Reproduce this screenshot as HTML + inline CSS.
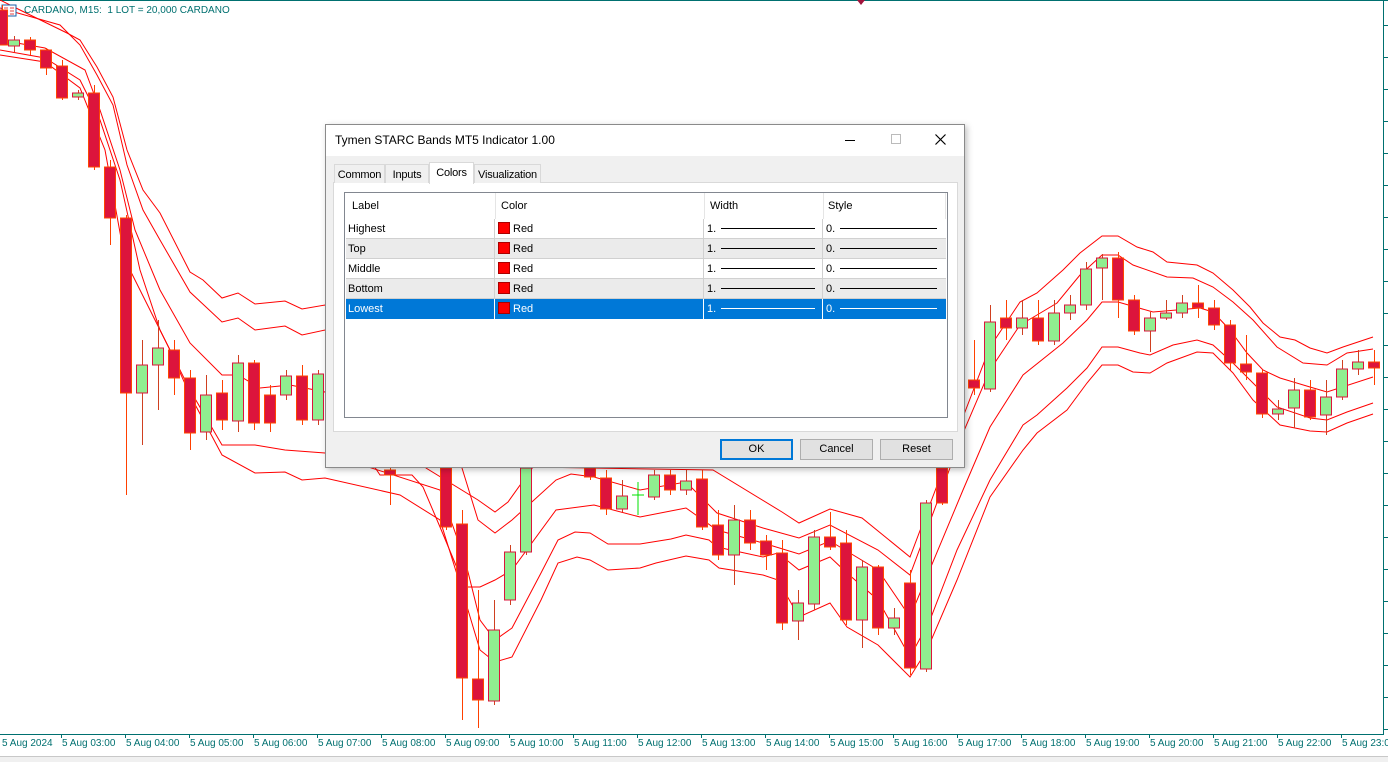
<!DOCTYPE html>
<html><head><meta charset="utf-8">
<style>
*{margin:0;padding:0;box-sizing:border-box}
body{width:1388px;height:762px;overflow:hidden;background:#fff;font-family:"Liberation Sans",sans-serif;position:relative}
#chart{position:absolute;left:0;top:0}
.ax{position:absolute;top:738px;font-size:10px;color:#007070;white-space:nowrap}
.title{position:absolute;left:24px;top:5px;font-size:10px;color:#007070}
.dlg{position:absolute;left:325px;top:124px;width:640px;height:344px;background:#f0f0f0;border:1px solid #8a8a8a;box-shadow:2px 2px 6px rgba(0,0,0,.25);font-size:11px;color:#000}
.tb{height:31px;background:#fff;position:relative}
.tb span{position:absolute;left:9px;top:8px;font-size:12px}
.tab{position:absolute;top:39px;height:19px;border:1px solid #d9d9d9;border-bottom:none;background:#f0f0f0;padding:4px 0 0;text-align:center;font-size:11px;letter-spacing:-0.2px;white-space:nowrap}
.panel{position:absolute;left:7px;top:57px;width:625px;height:250px;background:#fff;border:1px solid #d9d9d9}
.list{position:absolute;left:18px;top:67px;width:604px;height:226px;border:1px solid #828790;background:#fff}
.row{position:absolute;left:1px;width:600px;height:20px}
.c{position:absolute;top:4px}
.sw{position:absolute;top:3px;width:12px;height:12px;background:#f00;border:1px solid #a00}
.ln{position:absolute;top:9px;height:1px;background:#000}
.vl{position:absolute;top:0;width:1px;height:20px;background:#d0d0d0}
.btn{position:absolute;top:314px;width:73px;height:21px;border:1px solid #adadad;background:#e1e1e1;text-align:center;font-size:11px;line-height:19px}
</style></head><body>
<svg id="chart" width="1388" height="762" xmlns="http://www.w3.org/2000/svg"></svg>
<div class="title">CARDANO, M15:&nbsp; 1 LOT = 20,000 CARDANO</div>
<div class="ax" style="left:2px">5 Aug 2024</div>
<div id="axl"></div>

<div class="dlg">
 <div class="tb"><span>Tymen STARC Bands MT5 Indicator 1.00</span>
  <div style="position:absolute;left:519px;top:15px;width:10px;height:1px;background:#000"></div>
  <div style="position:absolute;left:565px;top:9px;width:10px;height:10px;border:1px solid #bbb"></div>
  <svg style="position:absolute;left:609px;top:9px" width="11" height="11"><path d="M0.5 0.5L10.5 10.5M10.5 0.5L0.5 10.5" stroke="#000" stroke-width="1.2"/></svg>
 </div>
 <div class="panel"></div>
 <div class="tab" style="left:8px;width:51px">Common</div>
 <div class="tab" style="left:59px;width:44px">Inputs</div>
 <div class="tab" style="left:103px;top:37px;height:22px;width:45px;background:#fff;z-index:2">Colors</div>
 <div class="tab" style="left:148px;width:67px">Visualization</div>
 <div class="list">
  <div class="row" style="top:0;height:26px"><span class="c" style="left:6px;top:7px">Label</span><span class="c" style="left:155px;top:7px">Color</span><span class="c" style="left:364px;top:7px">Width</span><span class="c" style="left:482px;top:7px">Style</span>
   <div class="vl" style="left:149px;height:26px;background:#e5e5e5"></div><div class="vl" style="left:358px;height:26px;background:#e5e5e5"></div><div class="vl" style="left:477px;height:26px;background:#e5e5e5"></div><div class="vl" style="left:599px;height:26px;background:#e5e5e5"></div></div>
  <div class="row" style="top:26px;background:#fff;border-bottom:1px solid #d0d0d0"><span class="c" style="left:2px">Highest</span></div>
  <div class="row" style="top:46px;background:#ebebeb;border-bottom:1px solid #d0d0d0"><span class="c" style="left:2px">Top</span></div>
  <div class="row" style="top:66px;background:#fff;border-bottom:1px solid #d0d0d0"><span class="c" style="left:2px">Middle</span></div>
  <div class="row" style="top:86px;background:#ebebeb;border-bottom:1px solid #d0d0d0"><span class="c" style="left:2px">Bottom</span></div>
  <div class="row" style="top:106px;background:#0078d7;color:#fff"><span class="c" style="left:2px">Lowest</span></div>
  <div id="cells"></div>
 </div>
 <div class="btn" style="left:394px;border:2px solid #0078d7;line-height:17px">OK</div>
 <div class="btn" style="left:474px">Cancel</div>
 <div class="btn" style="left:554px">Reset</div>
</div>
<script>
var s=document.getElementById('chart'),h='';
h+='<rect x="0" y="0" width="1388" height="1" fill="#007070"/>';
h+='<rect x="1383" y="0" width="1" height="735" fill="#007070"/><rect x="0" y="734" width="1384" height="1" fill="#007070"/>';
for(var y=25;y<734;y+=32)h+='<rect x="1384" y="'+y+'" width="4" height="1" fill="#007070"/>';
h+='<rect x="0" y="756" width="1388" height="6" fill="#f0f0f0"/><rect x="0" y="756" width="1388" height="1" fill="#c8c8c8"/>';
var L=[
[[0,0],[20,10],[67,33],[80,40],[97,67],[113,97],[127,150],[143,190],[160,213],[190,272],[203,280],[222,298],[238,293],[255,304],[285,301],[302,309],[325,305],[426,468],[478,500],[495,512],[508,502],[533,467],[713,470],[782,512],[799,523],[830,509],[862,518],[910,557],[963,417],[990,347],[1020,302],[1037,293],[1063,270],[1080,253],[1102,236],[1118,236],[1137,247],[1153,252],[1167,262],[1197,265],[1213,273],[1233,290],[1250,307],[1263,323],[1280,337],[1295,340],[1310,348],[1327,353],[1343,347],[1373,337]],
[[0,8],[60,25],[80,45],[97,75],[113,105],[127,165],[143,210],[160,240],[190,292],[222,322],[238,318],[255,330],[285,326],[302,335],[325,330],[462,468],[478,520],[495,533],[512,520],[556,480],[571,474],[594,477],[640,490],[686,482],[717,513],[763,528],[799,538],[830,525],[878,550],[910,575],[963,433],[990,370],[1020,325],[1037,315],[1057,303],[1080,275],[1102,255],[1118,255],[1133,265],[1167,277],[1193,278],[1213,287],[1233,302],[1253,320],[1277,347],[1303,363],[1327,365],[1347,353],[1373,349]],
[[0,40],[45,48],[85,70],[100,110],[120,170],[135,230],[160,290],[190,343],[222,375],[238,375],[260,388],[290,385],[325,392],[380,475],[412,475],[423,487],[440,527],[465,587],[480,587],[495,580],[512,570],[556,510],[594,505],[640,517],[686,508],[717,530],[763,543],[799,554],[830,541],[878,570],[910,617],[963,490],[990,427],[1023,375],[1063,343],[1087,320],[1102,302],[1118,302],[1153,312],[1200,308],[1213,312],[1230,330],[1247,353],[1263,370],[1280,378],[1310,387],[1327,392],[1373,377]],
[[0,50],[45,58],[80,80],[100,120],[120,180],[140,270],[160,330],[190,390],[222,445],[255,445],[285,450],[325,453],[440,490],[465,560],[480,620],[495,640],[512,628],[541,573],[558,540],[575,532],[590,533],[608,544],[640,544],[671,539],[686,535],[709,540],[717,547],[763,557],[778,553],[799,570],[830,557],[847,573],[878,600],[910,657],[930,620],[957,550],[990,480],[1023,425],[1037,415],[1067,388],[1087,368],[1102,347],[1118,347],[1140,353],[1150,355],[1173,345],[1197,340],[1213,345],[1233,363],[1253,383],[1277,407],[1310,418],[1327,420],[1347,412],[1373,403]],
[[0,55],[45,62],[80,88],[105,150],[125,260],[145,300],[170,350],[190,395],[222,455],[255,473],[285,472],[302,480],[325,478],[400,495],[440,520],[465,600],[480,650],[495,662],[512,657],[541,600],[558,563],[577,557],[590,560],[608,570],[640,568],[656,563],[686,556],[709,560],[719,568],[763,575],[778,580],[799,617],[830,603],[847,627],[878,645],[910,677],[927,650],[957,580],[990,497],[1023,450],[1037,433],[1067,410],[1087,383],[1102,365],[1118,365],[1133,372],[1150,373],[1167,363],[1197,352],[1213,353],[1233,373],[1253,400],[1280,425],[1310,431],[1327,432],[1347,423],[1373,414]]];
L.forEach(function(p){h+='<polyline fill="none" stroke="#f00" stroke-width="1" points="'+p.map(function(q){return q.join(',')}).join(' ')+'"/>';});
h+='<rect x="2" y="5" width="14" height="11" fill="#fff" stroke="#1a5fa8"/><path d="M4 8h4M4 11h4M4 14h4M10 8h4M10 11h4M10 14h4" stroke="#e04040"/>';
h+='<path d="M857 0l4 5 4-5z" fill="#a0143c"/>';
var ax='';
for(var i=0;i<21;i++){var x=62+i*64;h+='<rect x="'+(x-1)+'" y="734" width="1" height="4" fill="#007070"/>';ax+='<div class="ax" style="left:'+x+'px">5 Aug '+String(i+3).padStart(2,'0')+':00</div>';}
document.getElementById('axl').innerHTML=ax;
var C=[[2,10,45,5,45,0],[14,46,40,36,52,1],[30,40,50,37,55,0],[46,50,68,48,75,0],[62,66,98,60,100,0],[78,97,93,90,100,1],[94,93,167,85,170,0],[110,167,218,160,245,0],[126,218,393,215,495,0],[142,393,365,340,445,1],[158,365,348,320,410,1],[174,350,378,340,395,0],[190,378,433,370,450,0],[206,432,395,375,440,1],[222,393,420,380,430,0],[238,421,363,355,432,1],[254,363,423,360,430,0],[270,395,423,385,432,0],[286,395,376,370,400,1],[302,376,420,365,425,0],[318,420,374,370,425,1],
[390,470,475,460,505,0],[446,468,527,460,530,0],[462,524,678,510,720,0],[478,679,700,590,728,0],[494,701,630,600,705,1],[510,600,552,545,605,1],[526,552,468,460,555,1],[590,468,477,460,480,0],[606,478,509,470,515,0],[622,509,496,480,512,1],[654,497,475,470,500,1],[670,475,490,470,495,0],[686,490,481,470,495,1],[702,479,527,470,530,0],[718,525,555,510,560,0],[734,555,520,505,585,1],[750,520,543,510,550,0],[766,541,555,535,570,0],[782,553,623,540,630,0],[798,621,603,590,640,1],[814,604,537,530,610,1],[830,537,547,512,550,0],[846,543,620,530,625,0],[862,620,567,560,648,1],[878,567,628,565,635,0],[894,628,618,608,635,1],[910,583,668,570,675,0],[926,669,503,500,672,1],[942,468,503,460,505,0],
[974,380,388,340,395,0],[990,389,322,305,392,1],[1006,318,328,300,340,0],[1022,328,318,300,335,1],[1038,318,341,300,345,0],[1054,341,313,300,345,1],[1070,313,305,295,320,1],[1086,305,269,262,310,1],[1102,268,258,254,300,1],[1118,258,300,252,318,0],[1134,300,331,295,335,0],[1150,331,318,312,352,1],[1166,318,313,300,320,1],[1182,313,303,295,318,1],[1198,303,308,285,318,0],[1214,308,325,300,330,0],[1230,325,363,320,370,0],[1246,364,372,335,380,0],[1262,373,414,370,418,0],[1278,414,409,400,420,1],[1294,408,390,378,428,1],[1310,390,417,380,420,0],[1326,415,397,380,435,1],[1342,397,369,360,400,1],[1358,369,362,350,375,1],[1374,362,368,350,385,0]];
C.forEach(function(c){var x=c[0],t=Math.min(c[1],c[2]),b=Math.max(c[1],c[2]),g=c[5];
h+='<rect x="'+x+'" y="'+c[3]+'" width="1" height="'+(c[4]-c[3])+'" fill="'+(g?'#d04020':'#ff4000')+'"/>';
h+='<rect x="'+(x-5.5)+'" y="'+t+'" width="11" height="'+Math.max(b-t,1)+'" fill="'+(g?'#90ee90':'#dc143c')+'" stroke="'+(g?'#dc143c':'#ff4500')+'"/>';});
h+='<path d="M638 482v33M632 495h12" stroke="#00e000"/>';
s.innerHTML=h;
var ce='';
[26,46,66,86,106].forEach(function(t,i){var sel=i==4,col=sel?'#fff':'#000';
ce+='<div class="vl" style="top:'+t+'px;left:149px;background:'+(sel?'#fff':'#d0d0d0')+'"></div><div class="vl" style="top:'+t+'px;left:358px;background:'+(sel?'#fff':'#d0d0d0')+'"></div><div class="vl" style="top:'+t+'px;left:477px;background:'+(sel?'#fff':'#d0d0d0')+'"></div>';
ce+='<div class="sw" style="top:'+(t+3)+'px;left:153px"></div><span class="c" style="top:'+(t+4)+'px;left:168px;color:'+col+'">Red</span>';
ce+='<span class="c" style="top:'+(t+4)+'px;left:362px;color:'+col+'">1.</span><div class="ln" style="top:'+(t+9)+'px;left:376px;width:94px;background:'+col+'"></div>';
ce+='<span class="c" style="top:'+(t+4)+'px;left:481px;color:'+col+'">0.</span><div class="ln" style="top:'+(t+9)+'px;left:495px;width:97px;background:'+col+'"></div>';});
document.getElementById('cells').innerHTML=ce;
</script>
</body></html>
